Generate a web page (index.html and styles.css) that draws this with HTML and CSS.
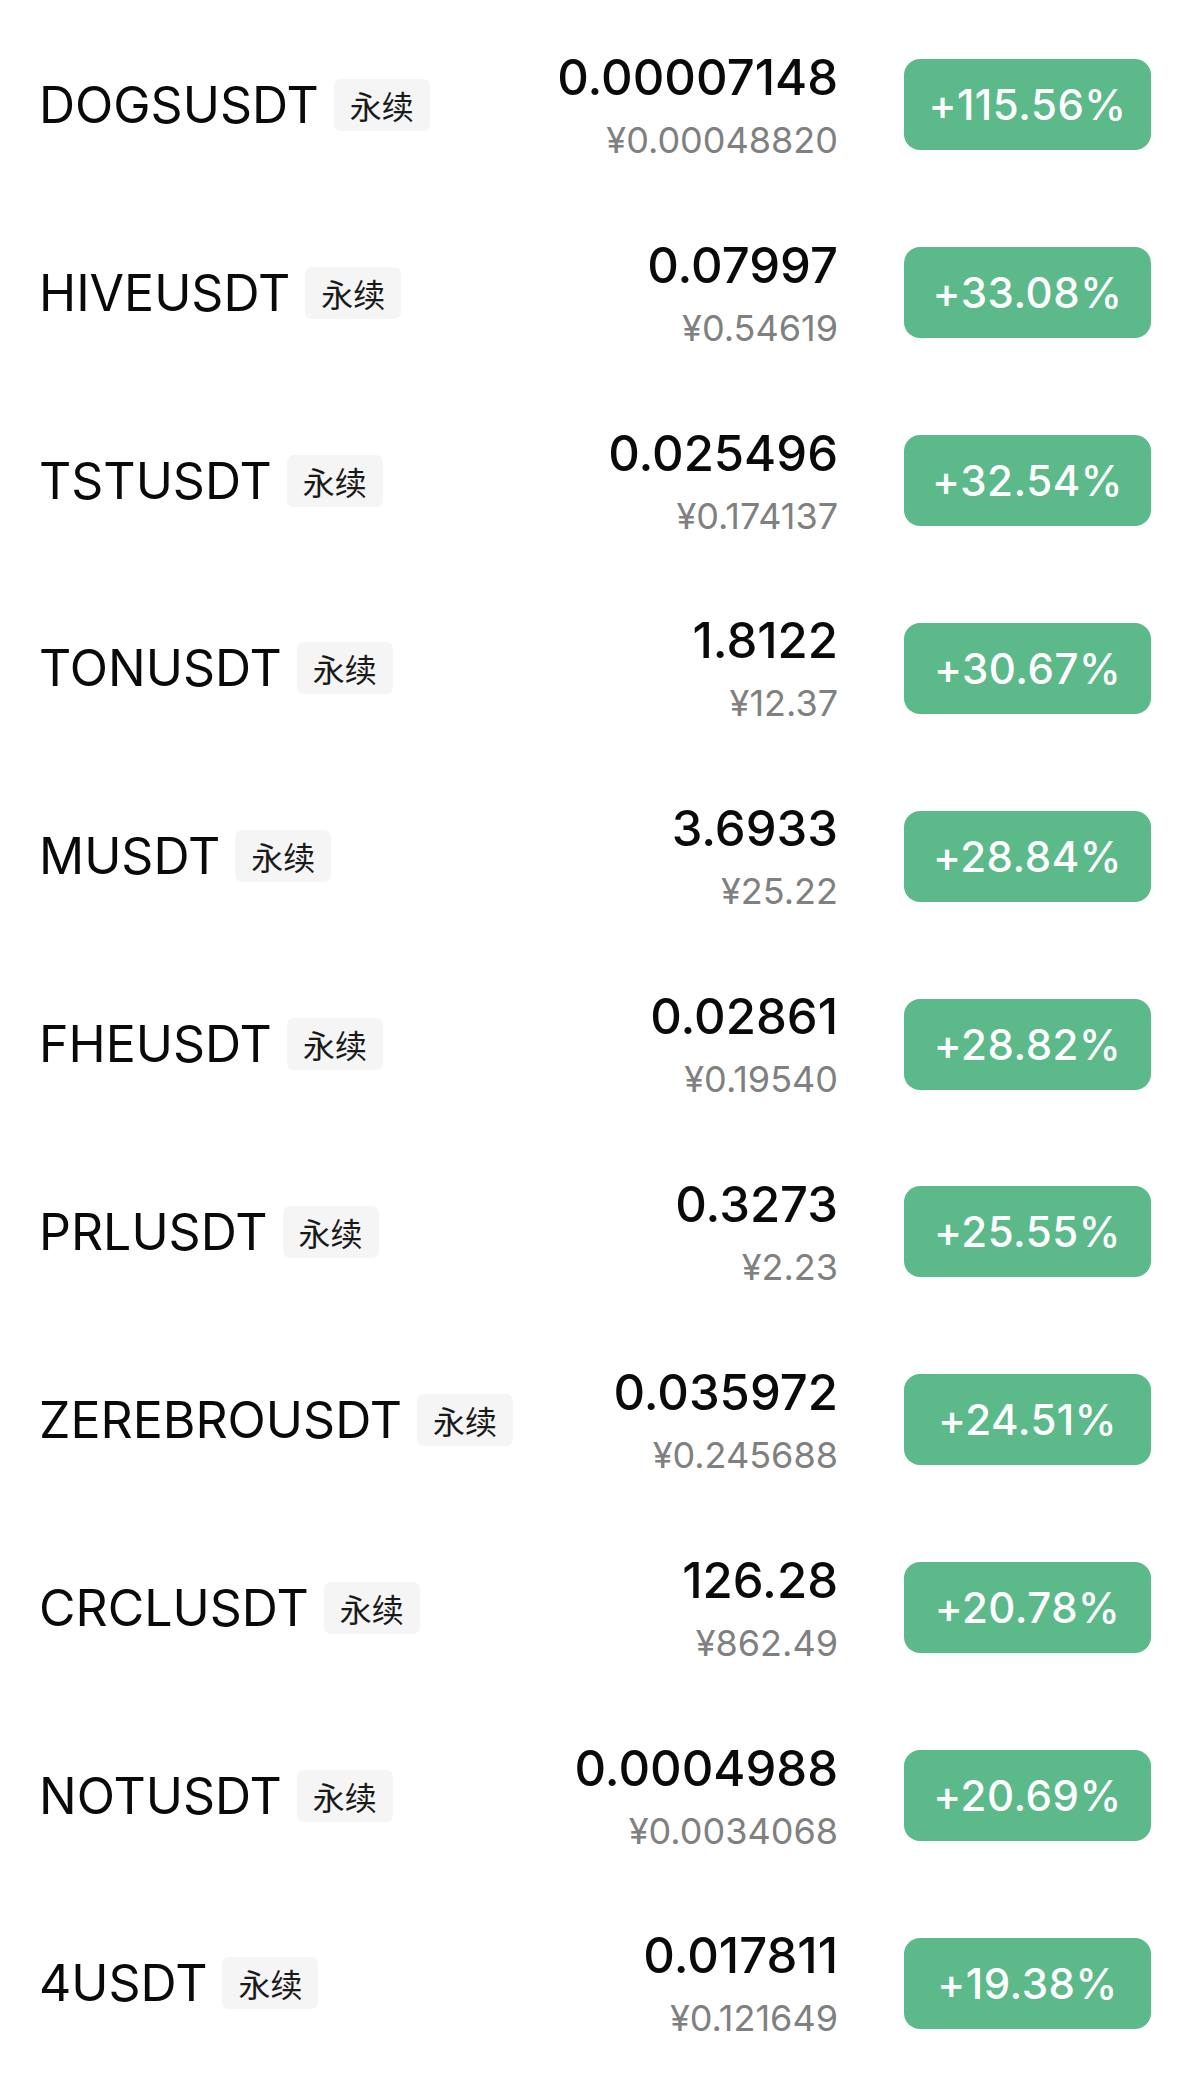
FILE: index.html
```html
<!DOCTYPE html>
<html lang="zh-CN">
<head>
  <meta charset="UTF-8" />
  <title>涨幅榜</title>
  <meta name="viewport" content="width=device-width, initial-scale=1.0" />
  <link rel="stylesheet" href="styles.css">
</head>
<body>
  <ul class="market-list">
    <li class="market-row">
      <div class="symbol"><span class="name">DOGSUSDT</span><span class="tag">永续</span></div>
      <div class="price"><div class="last">0.00007148</div><div class="fiat">¥0.00048820</div></div>
      <div class="change">+115.56%</div>
    </li>
    <li class="market-row">
      <div class="symbol"><span class="name">HIVEUSDT</span><span class="tag">永续</span></div>
      <div class="price"><div class="last">0.07997</div><div class="fiat">¥0.54619</div></div>
      <div class="change">+33.08%</div>
    </li>
    <li class="market-row">
      <div class="symbol"><span class="name">TSTUSDT</span><span class="tag">永续</span></div>
      <div class="price"><div class="last">0.025496</div><div class="fiat">¥0.174137</div></div>
      <div class="change">+32.54%</div>
    </li>
    <li class="market-row">
      <div class="symbol"><span class="name">TONUSDT</span><span class="tag">永续</span></div>
      <div class="price"><div class="last">1.8122</div><div class="fiat">¥12.37</div></div>
      <div class="change">+30.67%</div>
    </li>
    <li class="market-row">
      <div class="symbol"><span class="name">MUSDT</span><span class="tag">永续</span></div>
      <div class="price"><div class="last">3.6933</div><div class="fiat">¥25.22</div></div>
      <div class="change">+28.84%</div>
    </li>
    <li class="market-row">
      <div class="symbol"><span class="name">FHEUSDT</span><span class="tag">永续</span></div>
      <div class="price"><div class="last">0.02861</div><div class="fiat">¥0.19540</div></div>
      <div class="change">+28.82%</div>
    </li>
    <li class="market-row">
      <div class="symbol"><span class="name">PRLUSDT</span><span class="tag">永续</span></div>
      <div class="price"><div class="last">0.3273</div><div class="fiat">¥2.23</div></div>
      <div class="change">+25.55%</div>
    </li>
    <li class="market-row">
      <div class="symbol"><span class="name">ZEREBROUSDT</span><span class="tag">永续</span></div>
      <div class="price"><div class="last">0.035972</div><div class="fiat">¥0.245688</div></div>
      <div class="change">+24.51%</div>
    </li>
    <li class="market-row">
      <div class="symbol"><span class="name">CRCLUSDT</span><span class="tag">永续</span></div>
      <div class="price"><div class="last">126.28</div><div class="fiat">¥862.49</div></div>
      <div class="change">+20.78%</div>
    </li>
    <li class="market-row">
      <div class="symbol"><span class="name">NOTUSDT</span><span class="tag">永续</span></div>
      <div class="price"><div class="last">0.0004988</div><div class="fiat">¥0.0034068</div></div>
      <div class="change">+20.69%</div>
    </li>
    <li class="market-row">
      <div class="symbol"><span class="name">4USDT</span><span class="tag">永续</span></div>
      <div class="price"><div class="last">0.017811</div><div class="fiat">¥0.121649</div></div>
      <div class="change">+19.38%</div>
    </li>
  </ul>
</body>
</html>
```

FILE: styles.css
```css
:root {
  --text: #0a0a0a;
  --muted: #808080;
  --tag-bg: #f5f5f5;
  --up: #5cb98a;
}

body {
  margin: 0;
  background: #ffffff;
  color: var(--text);
  font-family: Inter, 'Noto Sans CJK SC', sans-serif;
  overflow: hidden;
}

.market-list {
  list-style: none;
  margin: 0;
  padding: 11px 0 0;
}

.market-row {
  height: 187.85px;
  display: flex;
  align-items: center;
  padding: 0 49px 0 39px;
}

.symbol {
  flex: 1;
  display: flex;
  align-items: center;
  gap: 15px;
}

.name {
  font-size: 50px;
  line-height: 1;
  font-weight: 400;
}

.tag {
  font-family: 'Noto Sans CJK SC', sans-serif;
  font-size: 32px;
  line-height: 52px;
  padding: 0 16px;
  background: var(--tag-bg);
  border-radius: 7px;
  color: #1a1a1a;
}

.price {
  text-align: right;
}

.last {
  font-size: 49px;
  line-height: 60px;
  font-weight: 500;
}

.fiat {
  font-size: 36px;
  line-height: 44px;
  margin-top: 10px;
  color: var(--muted);
}

.change {
  width: 247px;
  height: 91px;
  margin-left: 66px;
  border-radius: 16px;
  background: var(--up);
  color: #ffffff;
  font-size: 42px;
  font-weight: 500;
  letter-spacing: 0.5px;
  display: flex;
  align-items: center;
  justify-content: center;
}
```
